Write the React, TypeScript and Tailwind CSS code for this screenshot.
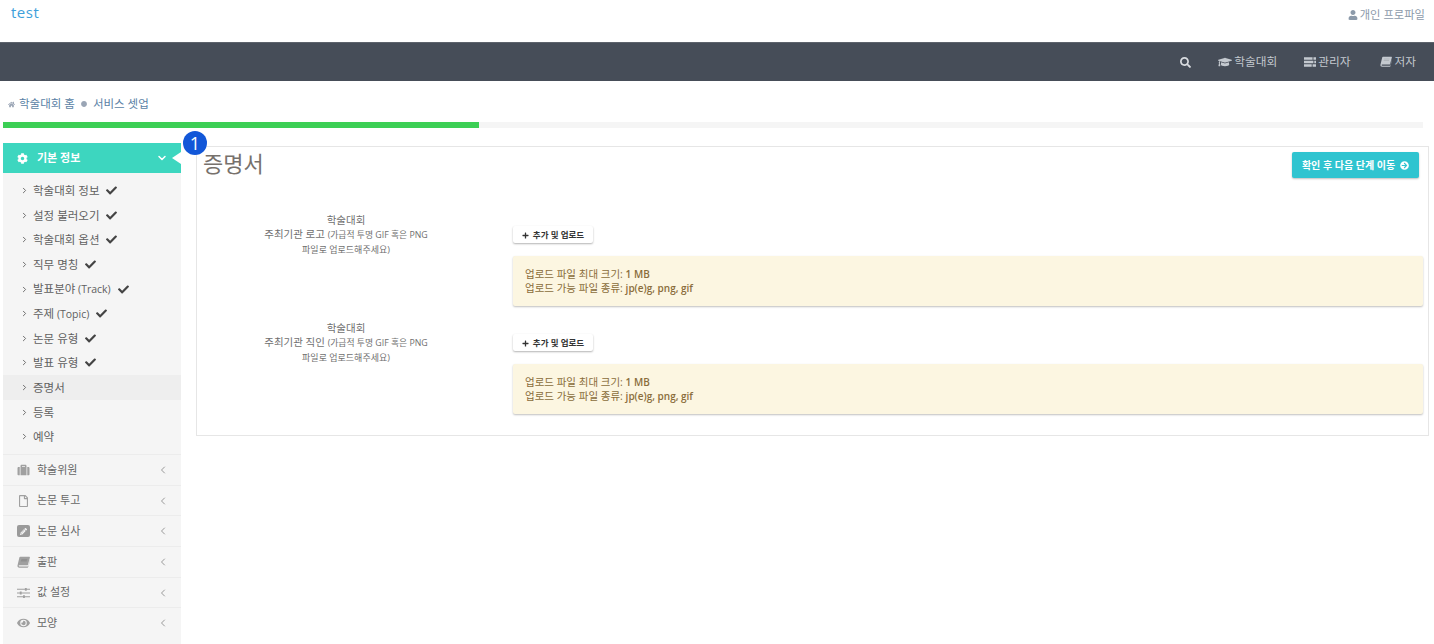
import { ChevronDown, ChevronLeft, ChevronRight } from 'lucide-react'
import {
  FaArrowCircleRight, FaCheck, FaCircle, FaCog, FaEye, FaGraduationCap, FaHome,
  FaPencilAlt, FaPlus, FaRegFile, FaSearch, FaSuitcase, FaUser,
} from 'react-icons/fa'
import type { ComponentType } from 'react'

type IconProps = { className?: string }

const steps: { label: string; en?: string; done?: boolean; active?: boolean }[] = [
  { label: '학술대회 정보', done: true },
  { label: '설정 불러오기', done: true },
  { label: '학술대회 옵션', done: true },
  { label: '직무 명칭', done: true },
  { label: '발표분야', en: '(Track)', done: true },
  { label: '주제', en: '(Topic)', done: true },
  { label: '논문 유형', done: true },
  { label: '발표 유형', done: true },
  { label: '증명서', active: true },
  { label: '등록' },
  { label: '예약' },
]

function EditSquare({ className }: IconProps) {
  return (
    <span className={`flex items-center justify-center rounded-[2px] bg-[#9a9a9a] ${className}`}>
      <FaPencilAlt className="text-[7px] text-[#f5f5f5]" />
    </span>
  )
}

// slanted book, the icon set only has an upright one
function SlantBook({ className }: IconProps) {
  return (
    <svg viewBox="0 0 16 14" fill="currentColor" className={className}>
      <path d="M4 .5h11.2c.5 0 .8.4.7.9l-2.4 8.9c-.1.4-.5.7-.9.7H3.4c-1 0-1.4.5-1.3 1 .1.4.5.6 1 .6h10c.4 0 .7-.3.8-.6l2-7.5.1.8-2.2 7.9c-.1.5-.5.8-1 .8H2.900C1.300 14 .2 12.800.6 11.300L3 1.300C3.100.8 3.500.5 4 .5z" />
      <path d="M5.500 3.200h7.200l-.2.8H5.300zM5 5.200h7.200l-.2.800H4.800z" fill="#00000033" />
    </svg>
  )
}

function TaskRows({ className }: IconProps) {
  return (
    <svg viewBox="0 0 14 12" fill="currentColor" className={className}>
      <path d="M0 .5h10v3H0zM11 .5h3v3h-3zM0 4.500h11v3H0zM12 4.500h2v3h-2zM0 8.500h9v3H0zM10 8.500h4v3h-4z" />
    </svg>
  )
}

function ThinSliders({ className }: IconProps) {
  return (
    <svg viewBox="0 0 14 12" fill="currentColor" className={className}>
      <path d="M0 1.500h14v1H0zM0 5.500h14v1H0zM0 9.500h14v1H0z" />
      <path d="M8.500 .5h2v3h-2zM3 4.500h2v3H3zM6.500 8.500h2v3h-2z" />
    </svg>
  )
}

const groups: { label: string; icon: ComponentType<IconProps> }[] = [
  { label: '학술위원', icon: FaSuitcase },
  { label: '논문 투고', icon: FaRegFile },
  { label: '논문 심사', icon: EditSquare },
  { label: '출판', icon: SlantBook },
  { label: '값 설정', icon: ThinSliders },
  { label: '모양', icon: FaEye },
]

function NavLink({ icon: Icon, label, iconClass, className = '' }: { icon: ComponentType<IconProps>; label: string; iconClass: string; className?: string }) {
  return (
    <a className={`flex items-center gap-[2px] text-[11.700px] text-[#c4c9cf] ${className}`}>
      <Icon className={iconClass} />
      {label}
    </a>
  )
}

function UploadRow({ title }: { title: string }) {
  return (
    <div className="flex">
      <div className="w-[298px] shrink-0 text-center text-[#6f6f6f]">
        <div className="text-[10.5px] leading-[14px]">학술대회</div>
        <div className="text-[10.5px] leading-[14px]">
          {title} <span className="text-[8.8px]">(가급적 투명 GIF 혹은 PNG</span>
        </div>
        <div className="mt-[1px] text-[9px] leading-[14px]">파일로 업로드해주세요)</div>
      </div>
      <div className="ml-[18px] flex-1 pt-[13px]">
        <button className="flex h-[17px] w-[80px] items-center justify-center gap-[4px] rounded-[2px] bg-white pt-[1px] text-[8.5px] font-semibold text-[#333] shadow-[0_1px_2px_rgba(0,0,0,0.3)]">
          <FaPlus className="text-[7px]" />
          추가 및 업로드
        </button>
        <div className="mt-[13px] h-[50px] rounded-[2px] bg-[#fcf6e1] px-[12px] pt-[12px] text-[10.5px] leading-[13.5px] text-[#8a6d3b] shadow-[0_1px_2px_rgba(0,0,0,0.25)]">
          <div>업로드 파일 최대 크기: <b className="text-[10px] font-semibold">1 MB</b></div>
          <div>업로드 가능 파일 종류: <b className="text-[10px] font-semibold">jp(e)g, png, gif</b></div>
        </div>
      </div>
    </div>
  )
}

export default function App() {
  return (
    <div className="h-[644px] overflow-hidden bg-white font-['Open_Sans','Noto_Sans_CJK_KR',sans-serif]">
      <header className="flex h-[42px] justify-between pl-[11px] pr-[9px]">
        <a className="pt-[2px] text-[15px] leading-[20px] tracking-[0.5px] text-[#3d9fdb]">test</a>
        <a className="flex items-center gap-[2px] self-start pt-[8px] text-[11.300px] leading-[14px] text-[#8c9aaa]">
          <FaUser className="text-[10px]" />
          개인 프로파일
        </a>
      </header>

      <nav className="flex h-[39px] items-center justify-end gap-[27px] border-t border-t-[#5d636c] bg-[#464d58] pr-[18px]">
        <FaSearch className="text-[11px] text-[#d8dbdf]" />
        <NavLink icon={FaGraduationCap} iconClass="h-[14px] w-[14px]" label="학술대회" />
        <NavLink icon={TaskRows} iconClass="h-[12px] w-[12px]" label="관리자" />
        <NavLink icon={SlantBook} iconClass="h-[11px] w-[12px]" label="저자" className="ml-[3px]" />
      </nav>

      <div className="flex h-[41px] items-center gap-[6px] pl-[8px] pt-[5px] text-[11.500px] text-[#5a7fa5]">
        <FaHome className="-mr-[2px] text-[7px] text-[#9aa5b5]" />
        <span>학술대회 홈</span>
        <FaCircle className="text-[6px] text-[#9aa5b5]" />
        <span>서비스 셋업</span>
      </div>

      <div className="ml-[3px] mr-[11px] h-[6px] bg-[#f5f5f5]">
        <div className="h-full w-[476px] bg-[#3ccf55]" />
      </div>

      <div className="flex pl-[3px] pr-[5px] pt-[15px]">
        <aside className="h-[520px] w-[178px] shrink-0 bg-[#f5f5f5]">
          <div className="relative flex h-[30px] items-center bg-[#3dd6bf] pl-[14px] pr-[13px] text-[11px] font-semibold text-white">
            <FaCog className="text-[11px]" />
            <span className="ml-[9px] flex-1">기본 정보</span>
            <ChevronDown className="h-[12px] w-[12px]" strokeWidth={3} />
            <span className="absolute right-0 top-[9px] h-0 w-0 border-y-[6px] border-r-[9px] border-y-transparent border-r-white" />
            <span className="absolute right-[-26px] top-[-12px] z-10 flex h-[24px] w-[24px] items-center justify-center rounded-full bg-[#1257d8] text-[18px] font-medium text-white">
              1
            </span>
          </div>
          <ul className="pb-[4px] pt-[5.500px]">
            {steps.map(s => (
              <li
                key={s.label}
                className={`flex h-[24.6px] items-center pl-[17px] text-[11.500px] text-[#5f5f5f] ${s.active ? 'bg-[#eeeeee]' : ''}`}
              >
                <ChevronRight className="mr-[4px] h-[9px] w-[9px] text-[#666]" strokeWidth={2.5} />
                <span className="whitespace-pre">
                  {s.label}
                  {s.en && <span className="text-[10.5px]"> {s.en}</span>}
                </span>
                {s.done && <FaCheck className="ml-[7px] text-[11px] text-[#444]" />}
              </li>
            ))}
          </ul>
          <div className="pt-[1px]">
            {groups.map(g => {
              const Icon = g.icon
              return (
                <div key={g.label} className="flex h-[30.7px] items-center border-t border-t-[#ececec] pl-[13px] pr-[12px] text-[11px] text-[#666]">
                  <span className="flex w-[14px] justify-center">
                    <Icon className="h-[12px] w-[13px] text-[#a0a0a0]" />
                  </span>
                  <span className="ml-[7px] flex-1">{g.label}</span>
                  <ChevronLeft className="h-[12px] w-[12px] text-[#999]" strokeWidth={2} />
                </div>
              )
            })}
          </div>
        </aside>

        <main className="ml-[15px] mt-[3px] h-[290px] flex-1 border border-[#e6e6e6] pl-[6px] pr-[5px]">
          <div className="flex items-start justify-between pr-[4px]">
            <h1 className="-mt-[1px] pt-[1px] text-[22px] leading-[32px] text-[#77716c]">증명서</h1>
            <button className="mt-[5px] flex h-[26px] w-[127px] items-center justify-center gap-[5px] rounded-[2px] bg-[#2fc4d0] text-[10px] font-semibold text-white shadow-[0_1px_2px_rgba(0,0,0,0.25)]">
              확인 후 다음 단계 이동
              <FaArrowCircleRight className="text-[9px]" />
            </button>
          </div>
          <div className="-ml-[6px] mt-[34px] flex flex-col gap-[15px]">
            <UploadRow title="주최기관 로고" />
            <UploadRow title="주최기관 직인" />
          </div>
        </main>
      </div>
    </div>
  )
}
